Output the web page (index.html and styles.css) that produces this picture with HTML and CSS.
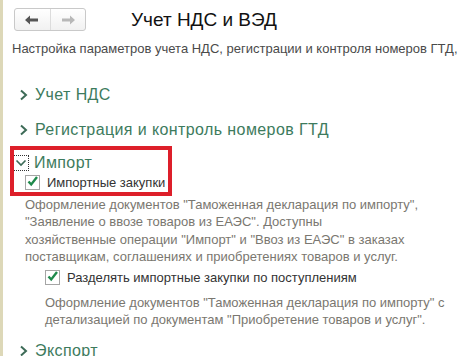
FILE: index.html
```html
<!DOCTYPE html>
<html lang="ru">
<head>
    <meta charset="UTF-8">
    <title>Учет НДС и ВЭД</title>
    <link rel="stylesheet" href="styles.css">
</head>
<body>
    <div class="page">
        <div class="header">
            <div class="nav">
                <span class="nav-btn">
                    <svg width="14" height="10" viewBox="0 0 14 10"><path d="M0 5 L5 0.5 L5 3.5 L13 3.5 L13 6.5 L5 6.5 L5 9.5 Z" fill="#555"/></svg>
                </span>
                <span class="nav-btn">
                    <svg width="14" height="10" viewBox="0 0 14 10"><path d="M14 5 L9 0.5 L9 3.5 L1 3.5 L1 6.5 L9 6.5 L9 9.5 Z" fill="#b8b8b8"/></svg>
                </span>
            </div>
            <h1 class="title">Учет НДС и ВЭД</h1>
        </div>

        <p class="intro">Настройка параметров учета НДС, регистрации и контроля номеров ГТД, а</p>

        <div class="group">
            <span class="chevron">
                <svg width="10" height="12" viewBox="0 0 10 12"><path d="M2 1.5 L7 6 L2 10.5" fill="none" stroke="#3d6b57" stroke-width="2"/></svg>
            </span>
            <span class="group-title">Учет НДС</span>
        </div>

        <div class="group">
            <span class="chevron">
                <svg width="10" height="12" viewBox="0 0 10 12"><path d="M2 1.5 L7 6 L2 10.5" fill="none" stroke="#3d6b57" stroke-width="2"/></svg>
            </span>
            <span class="group-title">Регистрация и контроль номеров ГТД</span>
        </div>

        <div class="group open">
            <span class="chevron focused">
                <svg width="12" height="10" viewBox="0 0 12 10"><path d="M1.5 2.5 L6 7 L10.5 2.5" fill="none" stroke="#3d6b57" stroke-width="1.6"/></svg>
            </span>
            <span class="group-title">Импорт</span>
        </div>

        <div class="section">
            <label class="check">
                <span class="box">
                    <svg width="13" height="13" viewBox="0 0 13 13"><path d="M2.5 6.5 L5.2 9.5 L11 2" fill="none" stroke="#1f8a4c" stroke-width="2.4"/></svg>
                </span>
                Импортные закупки
            </label>
            <p class="note">Оформление документов "Таможенная декларация по импорту",<br>"Заявление о ввозе товаров из ЕАЭС". Доступны<br>хозяйственные операции "Импорт" и "Ввоз из ЕАЭС" в заказах<br>поставщикам, соглашениях и приобретениях товаров и услуг.</p>

            <div class="sub">
                <label class="check">
                    <span class="box">
                        <svg width="13" height="13" viewBox="0 0 13 13"><path d="M2.5 6.5 L5.2 9.5 L11 2" fill="none" stroke="#1f8a4c" stroke-width="2.4"/></svg>
                    </span>
                    Разделять импортные закупки по поступлениям
                </label>
                <p class="note">Оформление документов "Таможенная декларация по импорту" с<br>детализацией по документам "Приобретение товаров и услуг".</p>
            </div>
        </div>

        <div class="group last">
            <span class="chevron">
                <svg width="10" height="12" viewBox="0 0 10 12"><path d="M2 1.5 L7 6 L2 10.5" fill="none" stroke="#3d6b57" stroke-width="2"/></svg>
            </span>
            <span class="group-title">Экспорт</span>
        </div>

        <div class="highlight"></div>
    </div>
</body>
</html>
```

FILE: styles.css
```css
html, body {
    margin: 0;
    height: 100%;
    overflow: hidden;
}
body {
    font-family: "Liberation Sans", Arial, sans-serif;
    background: #fff;
    color: #333;
}
.page {
    position: relative;
    height: 100%;
    border-left: 3px solid #ddd8b8;
    box-sizing: border-box;
    white-space: nowrap;
}
.header {
    display: flex;
    align-items: center;
    padding: 8px 0 0 11px;
}
.nav {
    display: flex;
    width: 72px;
    height: 23px;
    border: 1px solid #c9c9c9;
    border-radius: 3px;
    background: linear-gradient(#ffffff, #f1f1f1);
    box-sizing: border-box;
}
.nav-btn {
    flex: 1;
    display: flex;
    align-items: center;
    justify-content: center;
}
.nav-btn + .nav-btn {
    border-left: 1px solid #dcdcdc;
}
.title {
    margin: 0 0 0 45px;
    font-size: 19px;
    font-weight: normal;
    color: #111;
}
.intro {
    margin: 10px 0 0 9px;
    font-size: 13px;
    line-height: 16px;
    color: #4a4a4a;
}
.group {
    display: flex;
    align-items: center;
    margin: 28px 0 0 13px;
    height: 20px;
}
.group + .group {
    margin-top: 15px;
}
.group.open {
    margin-top: 13px;
}
.chevron {
    width: 16px;
    height: 16px;
    display: flex;
    align-items: center;
    justify-content: center;
    margin-right: 3px;
    box-sizing: border-box;
}
.chevron.focused {
    border: 1px dotted #333;
    margin-left: -3px;
    margin-right: 5px;
}
.group-title {
    font-size: 16px;
    letter-spacing: 0.4px;
    color: #3d7b5d;
}
.section {
    padding-left: 22px;
}
.check {
    display: flex;
    align-items: center;
    height: 18px;
    font-size: 13px;
    color: #333;
}
.box {
    width: 13px;
    height: 13px;
    border: 1px solid #a5a5a5;
    background: #fff;
    margin-right: 7px;
    display: flex;
    position: relative;
}
.box svg {
    position: absolute;
    left: 0;
    top: -1px;
}
.note {
    margin: 5px 0 0 0;
    font-size: 13px;
    line-height: 17.4px;
    color: #7a7770;
}
.sub {
    padding: 3px 0 0 20px;
}
.sub .note {
    margin-top: 7px;
}
.group.last {
    margin-top: 13px;
}
.highlight {
    position: absolute;
    left: 7px;
    top: 146px;
    width: 162px;
    height: 50px;
    border: 4px solid #dd1f2a;
    box-sizing: border-box;
}
```
